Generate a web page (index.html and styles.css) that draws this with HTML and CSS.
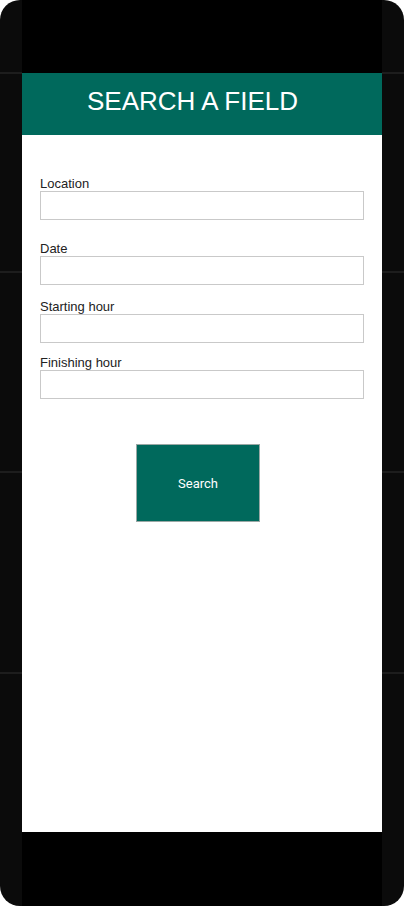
FILE: index.html
```html
<!DOCTYPE html>
<html>
<head>
<meta charset="utf-8">
<link rel="stylesheet" href="styles.css">
</head>
<body>
<div class="phone">
  <div class="screen">
    <div class="app">
      <header class="header"><h1 class="title">SEARCH A FIELD</h1></header>
      <form class="form">
        <div class="field field-location">
          <label class="label">Location</label>
          <input class="input" type="text">
        </div>
        <div class="field field-date">
          <label class="label">Date</label>
          <input class="input" type="text">
        </div>
        <div class="field field-start">
          <label class="label">Starting hour</label>
          <input class="input" type="text">
        </div>
        <div class="field field-end">
          <label class="label">Finishing hour</label>
          <input class="input" type="text">
        </div>
        <button class="search-btn" type="button">Search</button>
      </form>
    </div>
  </div>
</div>
</body>
</html>
```

FILE: styles.css
```css
html, body {
  margin: 0;
  padding: 0;
  background: #ffffff;
}

.phone {
  width: 404px;
  height: 906px;
  box-sizing: border-box;
  padding: 0 22px;
  border-radius: 20px;
  overflow: hidden;
  background-color: #0b0b0b;
  background-image:
    linear-gradient(#1d1d1d, #1d1d1d),
    linear-gradient(#1d1d1d, #1d1d1d),
    linear-gradient(#1d1d1d, #1d1d1d),
    linear-gradient(#1d1d1d, #1d1d1d);
  background-size: 100% 2px;
  background-repeat: no-repeat;
  background-position: 0 72px, 0 271px, 0 471px, 0 672px;
}

.screen {
  height: 906px;
  box-sizing: border-box;
  padding: 73px 0 74px;
  background: #000000;
}

.app {
  height: 759px;
  background: #ffffff;
  font-family: "Liberation Sans", Arial, sans-serif;
}

.header {
  height: 62px;
  box-sizing: border-box;
  background: #00695c;
  padding: 13px 0 0 65px;
}

.title {
  margin: 0;
  font-size: 26px;
  font-weight: normal;
  line-height: 30px;
  color: #ffffff;
}

.form {
  padding: 41px 18px 0;
}

.field {
  display: flex;
  flex-direction: column;
}

.field-date { margin-top: 21px; }
.field-start { margin-top: 14px; }
.field-end { margin-top: 12px; }

.label {
  font-size: 13px;
  line-height: 15px;
  color: #222222;
}

.input {
  height: 29px;
  box-sizing: border-box;
  margin: 0;
  border: 1px solid #c9c9c9;
  border-radius: 0;
  background: #ffffff;
  padding: 0 6px;
  outline: none;
}

.search-btn {
  display: block;
  margin: 45px 0 0 96px;
  width: 124px;
  height: 78px;
  box-sizing: border-box;
  border: 1px solid #9aa8a5;
  border-radius: 0;
  background: #00695c;
  color: #ffffff;
  font-family: Roboto, "Liberation Sans", Arial, sans-serif;
  font-size: 13px;
  padding: 0;
}
```
